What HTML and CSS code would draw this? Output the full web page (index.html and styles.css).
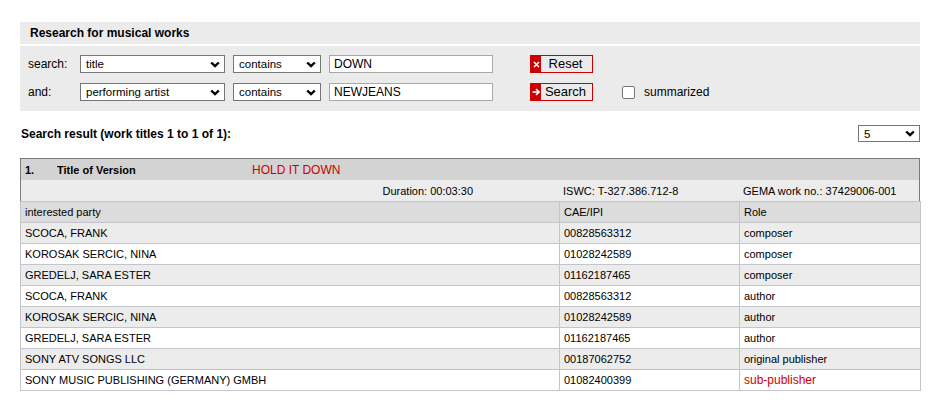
FILE: index.html
```html
<!DOCTYPE html>
<html lang="en">
<head>
<meta charset="utf-8">
<title>Research for musical works</title>
<link rel="stylesheet" href="styles.css">
</head>
<body>
<div class="page">
  <div class="panel-title">Research for musical works</div>
  <div class="panel-form">
    <div class="form-row">
      <span class="label">search:</span>
      <div class="selectbox w-field"><span>title</span><svg class="chev" viewBox="0 0 10 7" width="10" height="7"><path d="M1.2 1.5 L5 5.2 L8.8 1.5" fill="none" stroke="#000" stroke-width="2.4"/></svg></div>
      <div class="selectbox w-op"><span>contains</span><svg class="chev" viewBox="0 0 10 7" width="10" height="7"><path d="M1.2 1.5 L5 5.2 L8.8 1.5" fill="none" stroke="#000" stroke-width="2.4"/></svg></div>
      <div class="textbox">DOWN</div>
      <div class="btn"><span class="btn-icon"><svg viewBox="0 0 7 7" width="7" height="7"><path d="M1 1 L6 6 M6 1 L1 6" stroke="#fff" stroke-width="1.6"/></svg></span><span class="btn-text">Reset</span></div>
    </div>
    <div class="form-row">
      <span class="label">and:</span>
      <div class="selectbox w-field"><span>performing artist</span><svg class="chev" viewBox="0 0 10 7" width="10" height="7"><path d="M1.2 1.5 L5 5.2 L8.8 1.5" fill="none" stroke="#000" stroke-width="2.4"/></svg></div>
      <div class="selectbox w-op"><span>contains</span><svg class="chev" viewBox="0 0 10 7" width="10" height="7"><path d="M1.2 1.5 L5 5.2 L8.8 1.5" fill="none" stroke="#000" stroke-width="2.4"/></svg></div>
      <div class="textbox">NEWJEANS</div>
      <div class="btn"><span class="btn-icon"><svg viewBox="0 0 8 8" width="8" height="8"><path d="M0.5 4 H7 M4 1 L7 4 L4 7" fill="none" stroke="#fff" stroke-width="1.6"/></svg></span><span class="btn-text">Search</span></div>
      <span class="checkbox"></span>
      <span class="check-label">summarized</span>
    </div>
  </div>

  <div class="result-bar">
    <span class="result-title">Search result (work titles 1 to 1 of 1):</span>
    <div class="selectbox w-count"><span>5</span><svg class="chev" viewBox="0 0 10 7" width="10" height="7"><path d="M1.2 1.5 L5 5.2 L8.8 1.5" fill="none" stroke="#000" stroke-width="2.4"/></svg></div>
  </div>

  <div class="work-head">
    <div class="head-row">
      <span class="num">1.</span>
      <span class="head-label">Title of Version</span>
      <span class="work-title">HOLD IT DOWN</span>
    </div>
    <div class="meta-row">
      <span class="meta-dur">Duration: 00:03:30</span>
      <span class="meta-cell">ISWC: T-327.386.712-8</span>
      <span class="meta-cell">GEMA work no.: 37429006-001</span>
    </div>
  </div>
  <table class="parties">
    <colgroup><col class="c1"><col class="c2"><col class="c3"></colgroup>
    <tr class="th"><td>interested party</td><td>CAE/IPI</td><td>Role</td></tr>
    <tr class="odd"><td>SCOCA, FRANK</td><td>00828563312</td><td>composer</td></tr>
    <tr><td>KOROSAK SERCIC, NINA</td><td>01028242589</td><td>composer</td></tr>
    <tr class="odd"><td>GREDELJ, SARA ESTER</td><td>01162187465</td><td>composer</td></tr>
    <tr><td>SCOCA, FRANK</td><td>00828563312</td><td>author</td></tr>
    <tr class="odd"><td>KOROSAK SERCIC, NINA</td><td>01028242589</td><td>author</td></tr>
    <tr><td>GREDELJ, SARA ESTER</td><td>01162187465</td><td>author</td></tr>
    <tr class="odd"><td>SONY ATV SONGS LLC</td><td>00187062752</td><td>original publisher</td></tr>
    <tr><td>SONY MUSIC PUBLISHING (GERMANY) GMBH</td><td>01082400399</td><td class="red">sub-publisher</td></tr>
  </table>
</div>
</body>
</html>
```

FILE: styles.css
```css
html, body {
  margin: 0;
  padding: 0;
  background: #fff;
}
body {
  font-family: "Liberation Sans", Arial, sans-serif;
  font-size: 12px;
  color: #000;
}
.page {
  width: 900px;
  margin-left: 20px;
  padding-top: 22px;
}
.panel-title {
  background: #ebebeb;
  height: 22px;
  line-height: 22px;
  padding-left: 10px;
  font-weight: bold;
}
.panel-form {
  margin-top: 2px;
  background: #ebebeb;
  height: 65px;
  box-sizing: border-box;
  padding: 9px 0 0 8px;
  display: flex;
  flex-direction: column;
  gap: 10px;
}
.form-row {
  display: flex;
  align-items: center;
  height: 18px;
}
.label {
  width: 52px;
  flex: none;
}
.selectbox {
  box-sizing: border-box;
  height: 18px;
  border: 1px solid #767676;
  background: #fff;
  display: flex;
  align-items: center;
  justify-content: space-between;
  padding: 0 4px 0 5px;
  font-size: 11.5px;
  flex: none;
}
.chev { display: block; }
.w-field { width: 145px; margin-right: 8px; }
.w-op { width: 88px; margin-right: 8px; }
.w-count { width: 62px; height: 17px; }
.textbox {
  box-sizing: border-box;
  width: 164px;
  height: 18px;
  border: 1px solid #a9a9a9;
  background: #fff;
  padding: 0 0 0 4px;
  line-height: 16px;
  font-size: 12px;
  margin-right: 37px;
  flex: none;
}
.btn {
  box-sizing: border-box;
  width: 63px;
  height: 18px;
  border: 1px solid #cc0000;
  background: #ebebeb;
  display: flex;
  flex: none;
  margin-right: 29px;
}
.btn-icon {
  width: 10px;
  background: #cc0000;
  display: flex;
  align-items: center;
  justify-content: center;
}
.btn-text {
  flex: 1;
  text-align: center;
  line-height: 16px;
  font-size: 13px;
  padding-right: 2px;
}
.checkbox {
  box-sizing: border-box;
  width: 13px;
  height: 13px;
  border: 1px solid #767676;
  border-radius: 2px;
  background: #fff;
  margin-right: 9px;
  flex: none;
}
.result-bar {
  margin-top: 14px;
  height: 17px;
  display: flex;
  align-items: center;
  justify-content: space-between;
  padding-left: 1px;
}
.result-title { font-weight: bold; }
.work-head {
  margin-top: 16px;
  border: 1px solid #7a7a7a;
  border-bottom: none;
  font-size: 11px;
}
.head-row {
  height: 21px;
  background: #d3d3d3;
  display: flex;
  align-items: center;
  padding-left: 4px;
}
.num { width: 32px; font-weight: bold; }
.head-label { width: 195px; font-weight: bold; }
.work-title { color: #cc0000; font-size: 12px; }
.meta-row {
  height: 21px;
  background: #ececec;
  display: grid;
  grid-template-columns: 538px 180px 180px;
  align-items: center;
}
.meta-dur { text-align: right; padding-right: 86px; }
.meta-cell { padding-left: 4px; }
.parties {
  width: 900px;
  border-collapse: collapse;
  table-layout: fixed;
  font-size: 11px;
}
.parties col.c1 { width: 539px; }
.parties col.c2 { width: 180px; }
.parties col.c3 { width: 181px; }
.parties td {
  border: 1px solid #c4c4cc;
  height: 20px;
  padding: 0 4px;
  box-sizing: border-box;
  white-space: nowrap;
}
.parties tr { height: 21px; background: #fff; }
.parties tr.th { background: #dcdcdc; }
.parties tr.odd { background: #ececec; }
.parties td.red { color: #cc0000; font-size: 12px; }
```
